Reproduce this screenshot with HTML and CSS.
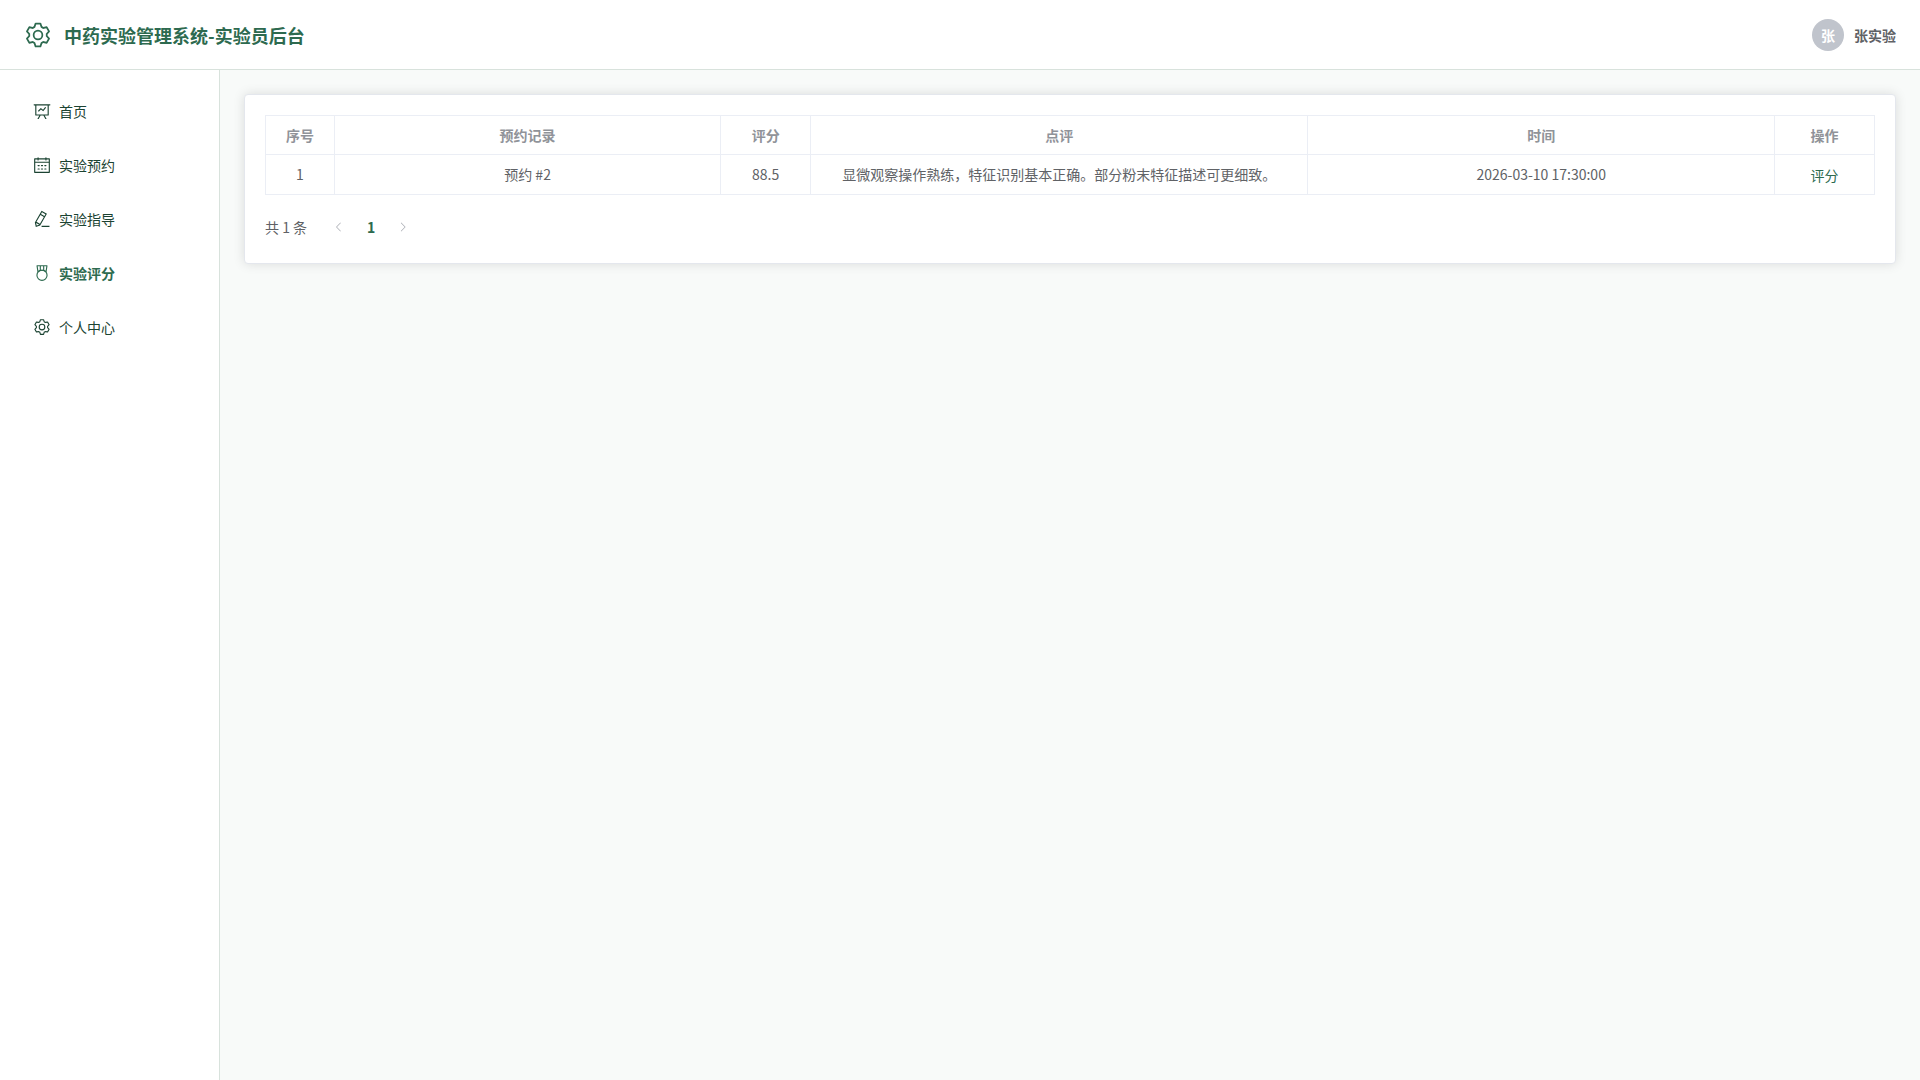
FILE: index.html
```html
<!DOCTYPE html>
<html lang="zh-CN">
<head>
    <meta charset="UTF-8">
    <meta name="viewport" content="width=device-width, initial-scale=1.0">
    <title>中药实验管理系统-实验员后台</title>
    <link rel="stylesheet" href="styles.css">
</head>
<body>
    <header class="header">
        <div class="brand">
            <svg class="brand-icon" viewBox="0 0 1024 1024" aria-hidden="true"><use href="#icon-setting"/></svg>
            <h1>中药实验管理系统-实验员后台</h1>
        </div>
        <div class="user">
            <span class="avatar">张</span>
            <span class="user-name">张实验</span>
        </div>
    </header>

    <div class="container">
        <aside class="sidebar">
            <nav class="menu">
                <a class="menu-item" href="#home">
                    <svg viewBox="0 0 1024 1024" aria-hidden="true"><path d="M359.168 768H160a32 32 0 0 1-32-32V192H64a32 32 0 0 1 0-64h896a32 32 0 1 1 0 64h-64v544a32 32 0 0 1-32 32H665.216l110.848 192h-73.856L591.36 768H433.024L322.176 960H248.32zM832 192H192v512h640zM342.656 534.656a32 32 0 1 1-45.312-45.312L444.992 341.76l125.44 94.08L679.04 300.032a32 32 0 1 1 49.92 39.936L581.632 524.224 451.008 426.24 342.656 534.592z"/></svg>
                    <span>首页</span>
                </a>
                <a class="menu-item" href="#booking">
                    <svg viewBox="0 0 1024 1024" aria-hidden="true"><path d="M128 384v512h768V192H768v32a32 32 0 1 1-64 0v-32H320v32a32 32 0 0 1-64 0v-32H128v128h768v64zm192-256h384V96a32 32 0 1 1 64 0v32h160a32 32 0 0 1 32 32v768a32 32 0 0 1-32 32H96a32 32 0 0 1-32-32V160a32 32 0 0 1 32-32h160V96a32 32 0 0 1 64 0zm-32 384h64a32 32 0 0 1 0 64h-64a32 32 0 0 1 0-64m0 192h64a32 32 0 1 1 0 64h-64a32 32 0 1 1 0-64m192-192h64a32 32 0 0 1 0 64h-64a32 32 0 0 1 0-64m0 192h64a32 32 0 1 1 0 64h-64a32 32 0 1 1 0-64m192-192h64a32 32 0 1 1 0 64h-64a32 32 0 1 1 0-64m0 192h64a32 32 0 1 1 0 64h-64a32 32 0 1 1 0-64"/></svg>
                    <span>实验预约</span>
                </a>
                <a class="menu-item" href="#guide">
                    <svg viewBox="0 0 1024 1024" aria-hidden="true"><path d="m199.04 672.64 193.984 112 224-387.968-193.92-112-224 388.032zm-23.872 60.16 32.896 148.288 144.896-45.696zM455.04 229.248l193.92 112 56.704-98.112-193.984-112zM104.32 708.8l384-665.024 304.768 175.936L409.152 884.8h.064l-248.448 78.336zm384 254.272v-64h448v64z"/></svg>
                    <span>实验指导</span>
                </a>
                <a class="menu-item active" href="#score" aria-current="page">
                    <svg viewBox="0 0 1024 1024" aria-hidden="true"><path d="M512 896a256 256 0 1 0 0-512 256 256 0 0 0 0 512m0 64a320 320 0 1 1 0-640 320 320 0 0 1 0 640"/><path d="M576 128H448v200a286.72 286.72 0 0 1 64-8c19.52 0 40.832 2.688 64 8zm64 0v219.648c24.448 9.088 50.56 20.416 78.4 33.92L757.44 128zm-256 0H266.624l39.04 253.568c27.84-13.504 53.888-24.832 78.336-33.92zM229.312 64h565.376a32 32 0 0 1 31.616 36.864L768 480c-113.792-64-199.104-96-256-96-56.896 0-142.208 32-256 96l-58.304-379.136A32 32 0 0 1 229.312 64"/></svg>
                    <span>实验评分</span>
                </a>
                <a class="menu-item" href="#profile">
                    <svg viewBox="0 0 1024 1024" aria-hidden="true"><path id="icon-setting" d="M600.704 64a32 32 0 0 1 30.464 22.208l35.2 109.376c14.784 7.232 28.928 15.36 42.432 24.512l112.384-24.192a32 32 0 0 1 34.432 15.36L944.32 364.8a32 32 0 0 1-4.032 37.504l-77.12 85.12a357.12 357.12 0 0 1 0 49.024l77.12 85.248a32 32 0 0 1 4.032 37.504l-88.704 153.6a32 32 0 0 1-34.432 15.296L708.8 803.904c-13.44 9.088-27.648 17.28-42.368 24.512l-35.264 109.376A32 32 0 0 1 600.704 960H423.296a32 32 0 0 1-30.464-22.208L357.696 828.48a351.616 351.616 0 0 1-42.56-24.64l-112.32 24.256a32 32 0 0 1-34.432-15.36L79.68 659.2a32 32 0 0 1 4.032-37.504l77.12-85.248a357.12 357.12 0 0 1 0-48.896l-77.12-85.248A32 32 0 0 1 79.68 364.8l88.704-153.6a32 32 0 0 1 34.432-15.296l112.32 24.256c13.568-9.152 27.776-17.408 42.56-24.64l35.2-109.312A32 32 0 0 1 423.232 64H600.64zm-23.424 64H446.72l-36.352 113.088-24.512 11.968a294.113 294.113 0 0 0-34.816 20.096l-22.656 15.36-116.224-25.088-65.28 113.152 79.68 88.192-1.92 27.136a293.12 293.12 0 0 0 0 40.192l1.92 27.136-79.808 88.192 65.344 113.152 116.224-25.024 22.656 15.296a294.113 294.113 0 0 0 34.816 20.096l24.512 11.968L446.72 896h130.688l36.48-113.152 24.448-11.904a288.282 288.282 0 0 0 34.752-20.096l22.592-15.296 116.288 25.024 65.28-113.152-79.744-88.192 1.92-27.136a293.12 293.12 0 0 0 0-40.256l-1.92-27.136 79.808-88.128-65.344-113.152-116.288 24.96-22.592-15.232a287.616 287.616 0 0 0-34.752-20.096l-24.448-11.904L577.344 128zM512 320a192 192 0 1 1 0 384 192 192 0 0 1 0-384m0 64a128 128 0 1 0 0 256 128 128 0 0 0 0-256"/></svg>
                    <span>个人中心</span>
                </a>
            </nav>
        </aside>

        <main class="main">
            <section class="card">
                <table class="score-table">
                    <colgroup>
                        <col class="col-index">
                        <col class="col-booking">
                        <col class="col-score">
                        <col>
                        <col class="col-time">
                        <col class="col-action">
                    </colgroup>
                    <thead>
                        <tr>
                            <th scope="col">序号</th>
                            <th scope="col">预约记录</th>
                            <th scope="col">评分</th>
                            <th scope="col">点评</th>
                            <th scope="col">时间</th>
                            <th scope="col">操作</th>
                        </tr>
                    </thead>
                    <tbody>
                        <tr>
                            <td>1</td>
                            <td>预约 #2</td>
                            <td>88.5</td>
                            <td>显微观察操作熟练，特征识别基本正确。部分粉末特征描述可更细致。</td>
                            <td>2026-03-10 17:30:00</td>
                            <td><button class="link-button" type="button">评分</button></td>
                        </tr>
                    </tbody>
                </table>

                <div class="pagination">
                    <span class="total">共 1 条</span>
                    <button class="page-button" type="button" aria-label="上一页" disabled>
                        <svg viewBox="0 0 1024 1024" aria-hidden="true"><path d="M609.408 149.376 277.76 489.6a32 32 0 0 0 0 44.672l331.648 340.352a29.12 29.12 0 0 0 41.728 0 30.592 30.592 0 0 0 0-42.752L339.264 511.936l311.872-319.872a30.592 30.592 0 0 0 0-42.688 29.12 29.12 0 0 0-41.728 0z"/></svg>
                    </button>
                    <button class="page-button current" type="button" aria-current="page">1</button>
                    <button class="page-button" type="button" aria-label="下一页" disabled>
                        <svg viewBox="0 0 1024 1024" aria-hidden="true"><path d="M340.864 149.312a30.592 30.592 0 0 0 0 42.752L652.736 512 340.864 831.872a30.592 30.592 0 0 0 0 42.752 29.12 29.12 0 0 0 41.728 0L714.24 534.336a32 32 0 0 0 0-44.672L382.592 149.376a29.12 29.12 0 0 0-41.728 0z"/></svg>
                    </button>
                </div>
            </section>
        </main>
    </div>
</body>
</html>
```

FILE: styles.css
```css
* {
    box-sizing: border-box;
}

body {
    margin: 0;
    min-height: 100vh;
    display: flex;
    flex-direction: column;
    font-family: 'Noto Sans CJK SC', sans-serif;
    font-size: 14px;
    color: #606266;
    background-color: #f8faf9;
}

svg {
    fill: currentColor;
}

button {
    font-family: inherit;
    font-size: 14px;
    padding: 0;
    border: none;
    background: none;
    cursor: pointer;
}

.header {
    display: flex;
    align-items: center;
    justify-content: space-between;
    height: 70px;
    padding: 0 24px;
    background-color: #fff;
    border-bottom: 1px solid #d8e2dc;
}

.brand {
    display: flex;
    align-items: center;
    gap: 12px;
    color: #2d6a4f;
}

.brand-icon {
    width: 28px;
    height: 28px;
}

h1 {
    margin: 0;
    font-size: 18px;
    font-weight: bold;
}

.user {
    display: flex;
    align-items: center;
    gap: 10px;
    font-weight: bold;
}

.avatar {
    width: 32px;
    height: 32px;
    line-height: 32px;
    border-radius: 50%;
    text-align: center;
    color: #fff;
    background-color: #c0c4cc;
}

.container {
    flex: 1;
    display: flex;
}

.sidebar {
    width: 220px;
    padding: 16px 10px;
    background-color: #fff;
    border-right: 1px solid #d8e2dc;
}

.menu {
    display: flex;
    flex-direction: column;
    gap: 4px;
}

.menu-item {
    display: flex;
    align-items: center;
    gap: 8px;
    height: 50px;
    padding: 0 23px;
    line-height: 50px;
    color: #1b4332;
    text-decoration: none;
}

.menu-item svg {
    width: 18px;
    height: 18px;
}

.menu-item.active {
    color: #2d6a4f;
    font-weight: bold;
}

.main {
    flex: 1;
    padding: 24px;
}

.card {
    padding: 20px;
    background-color: #fff;
    border: 1px solid #e4e7ed;
    border-radius: 4px;
    box-shadow: 0 0 12px rgba(0, 0, 0, 0.12);
}

.score-table {
    width: 100%;
    table-layout: fixed;
    border-collapse: separate;
    border-spacing: 0;
    border-top: 1px solid #ebeef5;
    border-left: 1px solid #ebeef5;
    line-height: 23px;
}

.score-table th,
.score-table td {
    padding: 0 12px;
    border-right: 1px solid #ebeef5;
    border-bottom: 1px solid #ebeef5;
    text-align: center;
}

.score-table th {
    height: 39px;
    color: #909399;
}

.score-table td {
    height: 40px;
}

.col-index {
    width: 69px;
}

.col-booking {
    width: 24%;
}

.col-score {
    width: 90px;
}

.col-time {
    width: 29%;
}

.col-action {
    width: 100px;
}

.link-button {
    line-height: 23px;
    color: #2d6a4f;
    vertical-align: middle;
}

.pagination {
    display: flex;
    align-items: center;
    margin-top: 16px;
}

.total {
    margin-right: 16px;
}

.page-button {
    display: flex;
    align-items: center;
    justify-content: center;
    width: 32px;
    height: 32px;
    color: #303133;
}

.page-button svg {
    width: 12px;
    height: 12px;
}

.page-button:disabled {
    color: #a8abb2;
    cursor: not-allowed;
}

.page-button.current {
    color: #2d6a4f;
    font-weight: bold;
}
```
